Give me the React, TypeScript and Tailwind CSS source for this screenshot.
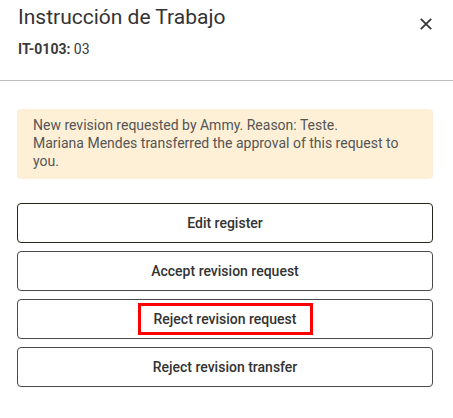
import React from "react";

export default function App() {
  const buttons = [
    { label: "Edit register", border: "border-[#26261f]", highlight: false },
    { label: "Accept revision request", border: "border-[#4a4a4a]", highlight: false },
    { label: "Reject revision request", border: "border-[#4a4a4a]", highlight: true },
    { label: "Reject revision transfer", border: "border-[#4a4a4a]", highlight: false },
  ];
  return (
    <div
      className="w-[453px] h-[418px] bg-white overflow-hidden"
      style={{ fontFamily: "Roboto, 'Liberation Sans', sans-serif" }}
    >
      <div className="flex items-start justify-between pl-[18px] pr-[21px] pt-[3px]">
        <div className="flex flex-col">
          <div className="text-[21px] leading-[28px] font-normal text-[#333333]">
            Instrucción de Trabajo
          </div>
          <div className="mt-[8px] text-[14px] leading-[20px] text-[#3a3a3a]">
            <span className="font-bold">IT-0103:</span> 03
          </div>
        </div>
        <button className="mt-[15px] w-[12px] h-[12px] flex items-center justify-center">
          <svg width="12" height="12" viewBox="0 0 12 12" fill="none">
            <path d="M0.8 0.8 L11.2 11.2 M11.2 0.8 L0.8 11.2" stroke="#3a3a3a" strokeWidth="1.9" />
          </svg>
        </button>
      </div>
      <div className="mt-[21px] h-px bg-[#bdbdbd]" />
      <div className="pl-[17px] pr-[20px] pt-[28px]">
        <div className="rounded-[4px] bg-[#fdf0d6] pl-[16px] pr-[16px] pt-[7px] pb-[9px] text-[14px] leading-[18px] text-[#555555]">
          New revision requested by Ammy. Reason: Teste.
          <br />
          Mariana Mendes transferred the approval of this request to you.
        </div>
        <div className="mt-[24px] flex flex-col gap-[8px]">
          {buttons.map((b) => (
            <button
              key={b.label}
              className={`h-[40px] w-full rounded-[4px] border ${b.border} bg-white flex items-center justify-center text-[14px] font-medium text-[#333333]`}
            >
              {b.highlight ? (
                <span className="border-[3px] border-[#ff0000] w-[175px] h-[32px] flex items-center justify-center">
                  {b.label}
                </span>
              ) : (
                b.label
              )}
            </button>
          ))}
        </div>
      </div>
    </div>
  );
}
